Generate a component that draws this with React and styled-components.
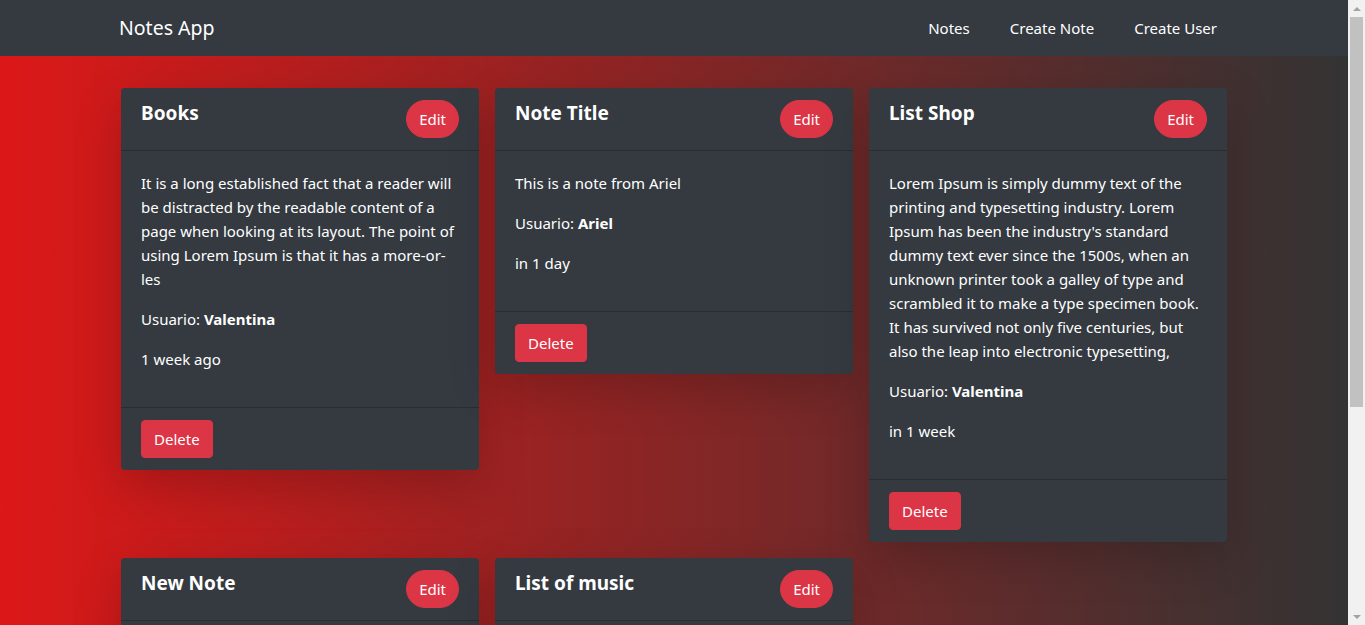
import React from "react"
import styled, { createGlobalStyle } from "styled-components"

const GlobalStyles = createGlobalStyle`
  * {
    box-sizing: border-box;
  }

  html,
  body {
    margin: 0;
    padding: 0;
  }

  body {
    font-family: "Noto Sans", "Open Sans", sans-serif;
    font-size: 15px;
    line-height: 24px;
    color: #fff;
    background: #333333;
  }
`

/* the page reserves the 17px the classic scrollbar takes in the reference */
const Page = styled.div`
  margin-right: 17px;
  min-height: 100vh;
  background: linear-gradient(to right, #dc1818, #333333);
`

const ScrollBar = styled.div`
  position: fixed;
  top: 0;
  right: 0;
  width: 17px;
  height: 100vh;
  background: #f1f1f1;
  display: flex;
  flex-direction: column;
  align-items: center;
`

const ScrollArrow = styled.div`
  flex: 0 0 17px;
  width: 17px;
  display: flex;
  align-items: center;
  justify-content: center;

  &::before {
    content: "";
    border-left: 4px solid transparent;
    border-right: 4px solid transparent;
    ${(p) =>
      p.$down
        ? "border-top: 4px solid #a3a3a3;"
        : "border-bottom: 4px solid #a3a3a3;"}
  }
`

const ScrollThumb = styled.div`
  width: 13px;
  height: 390px;
  background: #c1c1c1;
`

const ScrollSpace = styled.div`
  flex: 1;
`

const Navbar = styled.nav`
  background: #343a40;
  height: 56px;
`

const NavInner = styled.div`
  max-width: 1140px;
  height: 100%;
  margin: 0 auto;
  padding: 0 15px;
  display: flex;
  align-items: center;
  justify-content: space-between;
`

const Brand = styled.a`
  font-size: 19.5px;
  line-height: 30px;
  color: #fff;
  text-decoration: none;
`

const NavList = styled.ul`
  display: flex;
  list-style: none;
  margin: 0 4px 0 auto;
  padding: 0;
  gap: 24px;
`

const NavLink = styled.a`
  display: block;
  padding: 8px;
  color: #fff;
  text-decoration: none;
`

const Grid = styled.main`
  display: grid;
  grid-template-columns: repeat(3, 358px);
  justify-content: center;
  align-items: start;
  gap: 16px;
  padding: 32px 0 40px;
`

const Card = styled.article`
  background: #343a40;
  border-radius: 4px;
  box-shadow: 0 16px 48px rgba(0, 0, 0, 0.18);
  overflow: hidden;
`

const CardHeader = styled.header`
  display: flex;
  align-items: flex-start;
  justify-content: space-between;
  padding: 12px 20px;
  border-bottom: 1px solid rgba(0, 0, 0, 0.2);
`

const Title = styled.h5`
  margin: 1px 0 0;
  font-size: 19px;
  line-height: 24px;
  font-weight: 700;
`

const CardBody = styled.div`
  padding: 20px;

  p {
    margin: 0 0 16px;
  }
`

const CardFooter = styled.footer`
  padding: 12px 20px;
  border-top: 1px solid rgba(0, 0, 0, 0.2);
`

const Button = styled.button`
  font-family: inherit;
  font-size: 15px;
  line-height: 24px;
  padding: 6px 12px;
  color: #fff;
  background: #dc3545;
  border: 1px solid #dc3545;
  border-radius: ${(p) => (p.$pill ? "50rem" : "4px")};
  cursor: pointer;
`

const notes = [
  {
    title: "Books",
    content:
      "It is a long established fact that a reader will be distracted by the readable content of a page when looking at its layout. The point of using Lorem Ipsum is that it has a more-or-les",
    author: "Valentina",
    date: "1 week ago",
  },
  {
    title: "Note Title",
    content: "This is a note from Ariel",
    author: "Ariel",
    date: "in 1 day",
  },
  {
    title: "List Shop",
    content:
      "Lorem Ipsum is simply dummy text of the printing and typesetting industry. Lorem Ipsum has been the industry's standard dummy text ever since the 1500s, when an unknown printer took a galley of type and scrambled it to make a type specimen book. It has survived not only five centuries, but also the leap into electronic typesetting,",
    author: "Valentina",
    date: "in 1 week",
  },
  {
    title: "New Note",
    content: "Remember to buy the tickets for the concert",
    author: "Ariel",
    date: "2 days ago",
  },
  {
    title: "List of music",
    content: "Queen, Soda Stereo, The Beatles, Pink Floyd",
    author: "Valentina",
    date: "3 days ago",
  },
]

const NoteCard = ({ note }) => (
  <Card>
    <CardHeader>
      <Title>{note.title}</Title>
      <Button $pill>Edit</Button>
    </CardHeader>
    <CardBody>
      <p>{note.content}</p>
      <p>
        Usuario: <b>{note.author}</b>
      </p>
      <p>{note.date}</p>
    </CardBody>
    <CardFooter>
      <Button>Delete</Button>
    </CardFooter>
  </Card>
)

const App = () => (
  <>
    <GlobalStyles />
    <Page>
      <Navbar>
        <NavInner>
          <Brand href="#">Notes App</Brand>
          <NavList>
            <li>
              <NavLink href="#">Notes</NavLink>
            </li>
            <li>
              <NavLink href="#">Create Note</NavLink>
            </li>
            <li>
              <NavLink href="#">Create User</NavLink>
            </li>
          </NavList>
        </NavInner>
      </Navbar>
      <Grid>
        {notes.map((note) => (
          <NoteCard key={note.title} note={note} />
        ))}
      </Grid>
    </Page>
    <ScrollBar>
      <ScrollArrow />
      <ScrollThumb />
      <ScrollSpace />
      <ScrollArrow $down />
    </ScrollBar>
  </>
)

export default App
